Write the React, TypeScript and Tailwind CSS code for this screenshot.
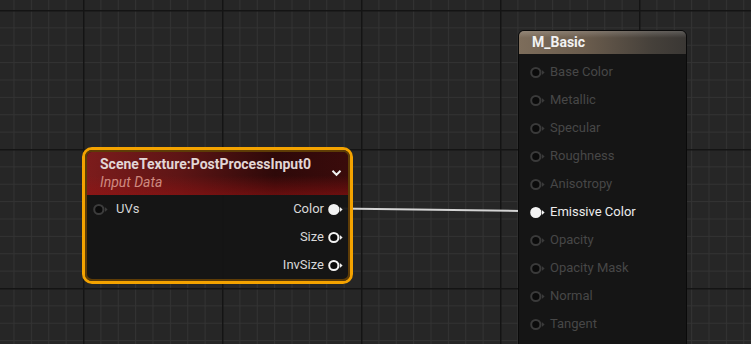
import React from 'react';

const font = { fontFamily: 'Roboto, "Noto Sans", sans-serif' };

const Pin: React.FC<{ filled?: boolean; color: string }> = ({ filled, color }) => (
    <svg width="16" height="13" viewBox="0 0 16 13" className="shrink-0">
        <circle cx="5.8" cy="6.5" r="4.6" fill={filled ? color : '#0b0b0b'} stroke={color} strokeWidth="2" />
        <path d="M11.8 3.9 L14.6 6.5 L11.8 9.1 Z" fill={color} />
    </svg>
);

const inputs = [
    'Base Color',
    'Metallic',
    'Specular',
    'Roughness',
    'Anisotropy',
    'Emissive Color',
    'Opacity',
    'Opacity Mask',
    'Normal',
    'Tangent',
];

const outputs = [
    { label: 'Color', filled: true },
    { label: 'Size', filled: false },
    { label: 'InvSize', filled: false },
];

export default function App() {
    return (
        <div className="relative w-[751px] h-[344px] overflow-hidden bg-[#262626]" style={font}>
            {/* Graph grid */}
            <svg className="absolute inset-0" width="751" height="344">
                <defs>
                    <pattern id="minor" x="83" y="10" width="17.375" height="17.375" patternUnits="userSpaceOnUse">
                        <path d="M0.5 0 V17.375 M0 0.5 H17.375" stroke="#333333" strokeWidth="1" fill="none" />
                    </pattern>
                    <pattern id="major" x="83" y="10" width="139" height="139" patternUnits="userSpaceOnUse">
                        <path d="M0.75 0 V139 M0 0.75 H139" stroke="#141414" strokeWidth="1.5" fill="none" />
                    </pattern>
                </defs>
                <rect width="751" height="344" fill="url(#minor)" />
                <rect width="751" height="344" fill="url(#major)" />
                {/* wire */}
                <line x1="338" y1="208.5" x2="534" y2="211.2" stroke="#d4d4d4" strokeWidth="2" />
            </svg>

            {/* SceneTexture node */}
            <div className="absolute left-[82px] top-[147px] w-[271px] rounded-[10px] border-[3px] border-[#f4a300]">
                <div className="rounded-[7px] border-2 border-[#5e3c06] bg-[#141414]/95 overflow-hidden">
                    <div className="relative h-[43px] pl-[13px] pt-[3px] bg-[linear-gradient(180deg,rgba(0,0,0,0)_0%,rgba(0,0,0,0)_55%,rgba(150,18,18,0.55)_100%),linear-gradient(90deg,#7c1c1c_0%,#5e1515_35%,#2e0909_72%,#3a0b0b_100%)]">
                        <div className="text-[14px] font-bold leading-[18px] text-[#e2d6d6]">SceneTexture:PostProcessInput0</div>
                        <div className="text-[14px] italic leading-[18px] text-[#cf8a80]">Input Data</div>
                        <svg className="absolute right-[6px] top-[17px]" width="11" height="8" viewBox="0 0 11 8">
                            <path d="M1.5 1.8 L5.5 5.8 L9.5 1.8" stroke="#f0f0f0" strokeWidth="2" fill="none" />
                        </svg>
                    </div>
                    <div className="flex">
                        <div className="flex-1 pl-[6px]">
                            <div className="h-[28px] flex items-center gap-[7px]">
                                <Pin color="#3c3c3c" />
                                <span className="text-[13px] text-[#d4d4d4]">UVs</span>
                            </div>
                        </div>
                        <div className="flex flex-col items-end pr-[4px]">
                            {outputs.map((o) => (
                                <div key={o.label} className="h-[28px] flex items-center gap-[4px]">
                                    <span className="text-[13px] text-[#d8d8d8]">{o.label}</span>
                                    <Pin color="#f2f2f2" filled={o.filled} />
                                </div>
                            ))}
                        </div>
                    </div>
                </div>
            </div>

            {/* Material result node */}
            <div className="absolute left-[518px] top-[30px] w-[169px] h-[330px] rounded-[6px] border border-[#0a0a0a] bg-[#151515] overflow-hidden">
                <div className="h-[23px] pl-[13px] flex items-center bg-[linear-gradient(180deg,rgba(255,255,255,0.18)_0%,rgba(255,255,255,0)_30%),linear-gradient(90deg,#7d6d5b_0%,#6a5c4d_40%,#45403a_80%,#3a3734_100%)]">
                    <span className="text-[14px] font-bold text-[#f2f2f2]">M_Basic</span>
                </div>
                <div className="pt-[4px] pl-[11px]">
                    {inputs.map((label) => {
                        const active = label === 'Emissive Color';
                        return (
                            <div key={label} className="h-[28px] flex items-center gap-[4px]">
                                <Pin color={active ? '#f4f4f4' : '#3a3a3a'} filled={active} />
                                <span className={`text-[13px] ${active ? 'text-[#ececec]' : 'text-[#474747]'}`}>{label}</span>
                            </div>
                        );
                    })}
                </div>
            </div>
        </div>
    );
}
